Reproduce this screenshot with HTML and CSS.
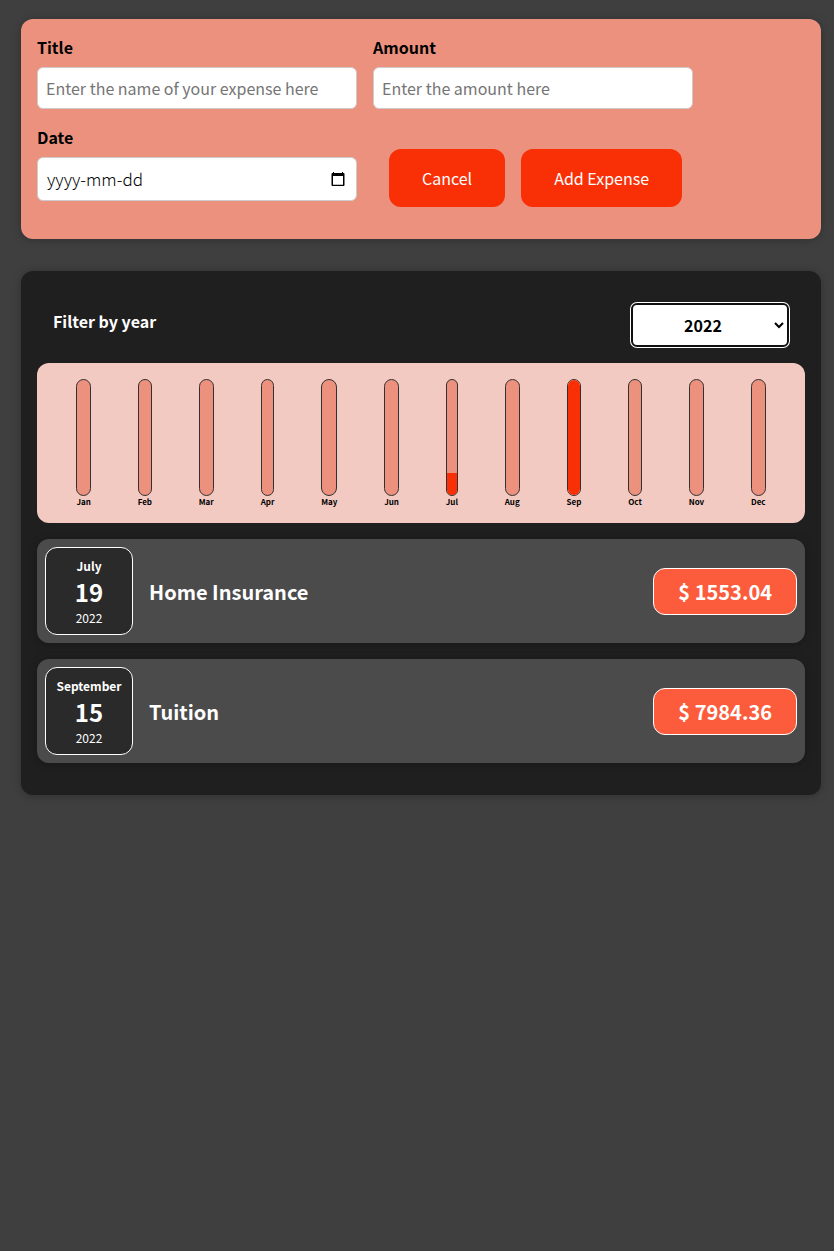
FILE: index.html
```html
<!DOCTYPE html>
<html lang="en">
<head>
<meta charset="utf-8">
<meta name="viewport" content="width=device-width, initial-scale=1">
<title>Expenses</title>
<link rel="stylesheet" href="styles.css">
</head>
<body>
<main class="page">
  <form class="expense-form">
    <div class="field">
      <label class="field-label" for="title">Title</label>
      <input class="field-input" id="title" type="text" placeholder="Enter the name of your expense here">
    </div>
    <div class="field">
      <label class="field-label" for="amount">Amount</label>
      <input class="field-input" id="amount" type="text" inputmode="decimal" placeholder="Enter the amount here">
    </div>
    <div class="field">
      <label class="field-label" for="date">Date</label>
      <div class="date-box">
        <input class="date-input" id="date" type="text" placeholder="yyyy-mm-dd">
        <button class="date-picker" type="button" aria-label="Show date picker">
          <svg width="14" height="14" viewBox="0 0 14 14" aria-hidden="true"><path fill="#000" fill-rule="evenodd" d="M2 0h1v1h8V0h1v1h.5q1 0 1 1v11q0 1-1 1h-11q-1 0-1-1V2q0-1 1-1H2zM2 4v8.700h10V4z"/></svg>
        </button>
      </div>
    </div>
    <div class="actions">
      <button class="button" type="button">Cancel</button>
      <button class="button" type="submit">Add Expense</button>
    </div>
  </form>

  <section class="expenses">
    <div class="filter">
      <label class="filter-label" for="year">Filter by year</label>
      <div class="select-box">
        <select class="year-select" id="year">
          <option>2022</option>
          <option>2021</option>
          <option>2020</option>
          <option>2019</option>
        </select>
        <svg class="select-arrow" width="10" height="7" viewBox="0 0 10 7" aria-hidden="true"><path d="M1 1l4 4 4-4" fill="none" stroke="#000" stroke-width="2"/></svg>
      </div>
    </div>

    <div class="chart">
      <div class="month"><div class="bar"></div><span class="month-label">Jan</span></div>
      <div class="month"><div class="bar"></div><span class="month-label">Feb</span></div>
      <div class="month"><div class="bar"></div><span class="month-label">Mar</span></div>
      <div class="month"><div class="bar"></div><span class="month-label">Apr</span></div>
      <div class="month"><div class="bar"></div><span class="month-label">May</span></div>
      <div class="month"><div class="bar"></div><span class="month-label">Jun</span></div>
      <div class="month"><div class="bar"><div class="bar-fill" style="height: 19%"></div></div><span class="month-label">Jul</span></div>
      <div class="month"><div class="bar"></div><span class="month-label">Aug</span></div>
      <div class="month"><div class="bar"><div class="bar-fill" style="height: 100%"></div></div><span class="month-label">Sep</span></div>
      <div class="month"><div class="bar"></div><span class="month-label">Oct</span></div>
      <div class="month"><div class="bar"></div><span class="month-label">Nov</span></div>
      <div class="month"><div class="bar"></div><span class="month-label">Dec</span></div>
    </div>

    <ul class="expense-list">
      <li class="expense">
        <div class="date"><span class="date-month">July</span><span class="date-day">19</span><span class="date-year">2022</span></div>
        <h2 class="expense-title">Home Insurance</h2>
        <div class="price">$ 1553.04</div>
      </li>
      <li class="expense">
        <div class="date"><span class="date-month">September</span><span class="date-day">15</span><span class="date-year">2022</span></div>
        <h2 class="expense-title">Tuition</h2>
        <div class="price">$ 7984.36</div>
      </li>
    </ul>
  </section>
</main>
</body>
</html>
```

FILE: styles.css
```css
* {
  box-sizing: border-box;
}

body {
  margin: 0;
  background: #3f3f3f;
  color: #fff;
  font-family: "Noto Sans CJK JP", "Noto Sans", sans-serif;
  font-size: 16px;
  line-height: 24px;
}

input,
select,
button {
  font: inherit;
}

.page {
  display: flex;
  flex-direction: column;
  gap: 32px;
  padding: 19px 13px 32px 21px;
}

.expense-form {
  display: flex;
  flex-wrap: wrap;
  gap: 16px;
  padding: 16px 16px 32px;
  border-radius: 12px;
  background: #eb917e;
  box-shadow: 0 1px 8px rgba(0, 0, 0, 0.25);
}

.field {
  display: flex;
  flex-direction: column;
  gap: 8px;
  width: 320px;
}

.field-label {
  color: #000;
  font-weight: 700;
}

.field-input,
.date-box {
  width: 100%;
  border: 1px solid #ccc;
  border-radius: 6px;
  background: #fff;
}

.field-input {
  height: 42px;
  padding: 8px;
}

.field-input::placeholder {
  color: #757575;
}

.date-box {
  display: flex;
  align-items: center;
  height: 44px;
  padding: 0 11px 0 9px;
}

.date-input {
  flex: 1;
  min-width: 0;
  padding: 0;
  border: 0;
  background: none;
  font-size: 17px;
  font-weight: 300;
}

.date-input::placeholder {
  color: #000;
}

.date-picker {
  display: flex;
  padding: 0;
  border: 0;
  background: none;
}

.actions {
  display: flex;
  gap: 16px;
  padding: 24px 0 0 16px;
}

.button {
  height: 58px;
  padding: 0 33px;
  border: 0;
  border-radius: 12px;
  background: #f92f06;
  color: #fff;
}

.expenses {
  padding: 16px 16px 32px;
  border-radius: 12px;
  background: #1f1f1f;
  box-shadow: 0 1px 8px rgba(0, 0, 0, 0.25);
}

.filter {
  display: flex;
  align-items: center;
  justify-content: space-between;
  padding: 16px;
}

.filter-label {
  padding-bottom: 8px;
  font-weight: 700;
}

.select-box {
  position: relative;
  display: flex;
}

.year-select {
  width: 158px;
  height: 44px;
  padding: 0 14px 0 0;
  border: 2px solid #101010;
  border-radius: 6px;
  box-shadow: 0 0 0 1px #fff;
  appearance: none;
  background: #fff;
  color: #000;
  font-weight: 700;
  text-align: center;
  text-align-last: center;
}

.select-arrow {
  position: absolute;
  top: 19px;
  right: 5px;
  pointer-events: none;
}

.chart {
  display: flex;
  justify-content: space-around;
  height: 160px;
  padding: 16px;
  border-radius: 12px;
  background: #f3cac2;
}

.month {
  display: flex;
  flex-direction: column;
}

.bar {
  display: flex;
  flex: 1;
  flex-direction: column;
  justify-content: flex-end;
  overflow: hidden;
  border: 1px solid #313131;
  border-radius: 12px;
  background: #eb917e;
}

.bar-fill {
  background: #f92f06;
}

.month-label {
  color: #000;
  font-size: 8px;
  font-weight: 700;
  line-height: 11px;
}

.expense-list {
  display: flex;
  flex-direction: column;
  gap: 16px;
  margin: 16px 0 0;
  padding: 0;
  list-style: none;
}

.expense {
  display: flex;
  align-items: center;
  gap: 16px;
  padding: 8px;
  border-radius: 12px;
  background: #4b4b4b;
  box-shadow: 0 1px 8px rgba(0, 0, 0, 0.25);
}

.date {
  display: flex;
  flex-direction: column;
  align-items: center;
  justify-content: center;
  width: 88px;
  height: 88px;
  padding-top: 2px;
  border: 1px solid #fff;
  border-radius: 12px;
  background: #2a2a2a;
}

.date-month,
.date-year {
  font-size: 12px;
  line-height: 18px;
}

.date-month {
  font-weight: 700;
}

.date-day {
  font-size: 24px;
  font-weight: 700;
  line-height: 34px;
}

.expense-title {
  flex: 1;
  margin: 0;
  font-size: 20px;
  font-weight: 700;
  line-height: 29px;
}

.price {
  padding: 8px 24px;
  border: 1px solid #fff;
  border-radius: 12px;
  background: #fc5c3c;
  font-size: 20px;
  font-weight: 700;
  line-height: 29px;
}
```
